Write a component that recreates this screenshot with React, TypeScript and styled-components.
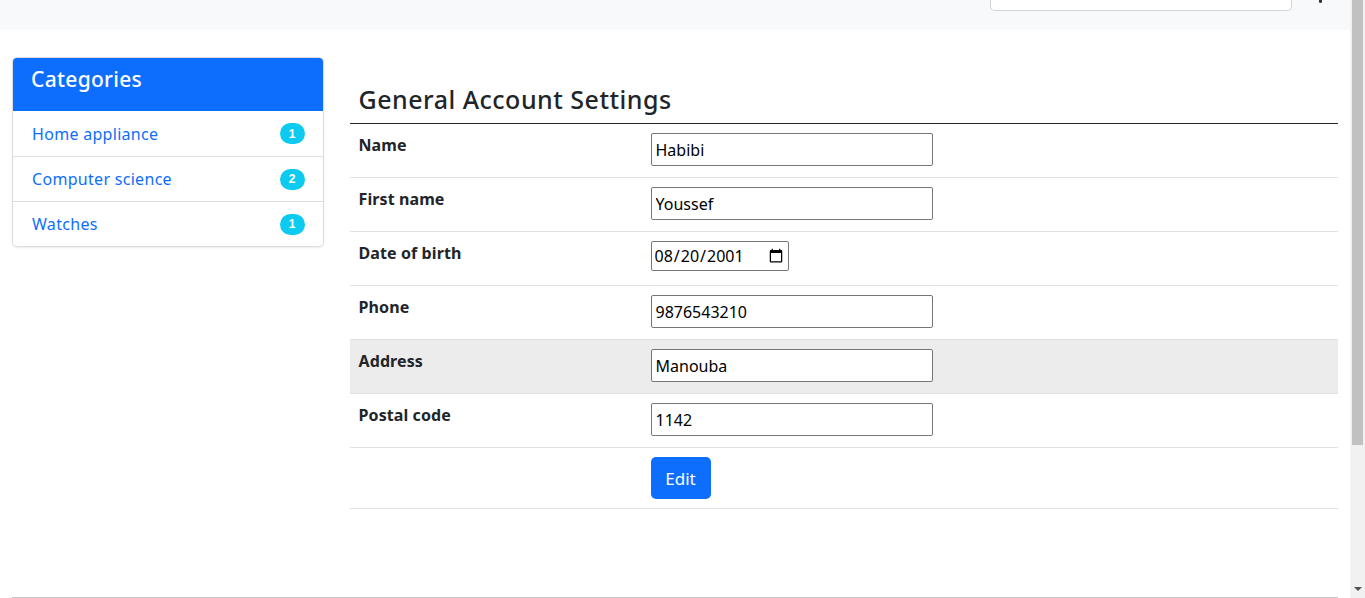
import React from "react";
import styled, { createGlobalStyle } from "styled-components";

const Global = createGlobalStyle`
  html, body { margin: 0; padding: 0; overflow: hidden; }
  body {
    font-family: "Noto Sans", "Open Sans", sans-serif;
    font-size: 16px;
    color: #212529;
    background: #fff;
  }
  * { box-sizing: border-box; }
`;

const Window = styled.div`
  display: flex;
  height: 100vh;
  overflow: hidden;
`;

const Page = styled.div`
  flex: 1;
  min-width: 0;
  overflow: hidden;
`;

const ScrollBar = styled.div`
  width: 15px;
  flex: none;
  background: #f1f1f1;
  display: flex;
  flex-direction: column;
  align-items: center;
  justify-content: space-between;
  padding-bottom: 7px;
`;

const Thumb = styled.div`
  width: 11px;
  height: 445px;
  background: #c1c1c1;
`;

const Arrow = styled.div`
  width: 0;
  height: 0;
  border-left: 4px solid transparent;
  border-right: 4px solid transparent;
  border-top: 4px solid #505050;
`;

const NavBar = styled.header`
  height: 30px;
  background: #f8f9fa;
  display: flex;
  justify-content: flex-end;
  align-items: flex-start;
  padding-right: 28px;
  gap: 27px;
`;

const SearchStub = styled.div`
  width: 302px;
  height: 11px;
  background: #fff;
  border: 1px solid #ced4da;
  border-top: none;
  border-radius: 0 0 5px 5px;
`;

const IconStub = styled.div`
  width: 3px;
  height: 3px;
  background: #333;
  border-radius: 0 0 2px 2px;
`;

const Layout = styled.div`
  display: grid;
  grid-template-columns: 25% 75%;
  width: 100%;
`;

const SideCol = styled.aside`
  padding: 27px 14px 0 12px;
`;

const MainCol = styled.main`
  padding: 55px 12px 0 12px;
`;

const Card = styled.div`
  border: 1px solid #dcdcdc;
  border-radius: 5px;
  box-shadow: 0 1px 2px rgba(0, 0, 0, 0.08);
  overflow: hidden;
`;

const CardHeader = styled.div`
  background: #0d6efd;
  color: #fff;
  height: 53px;
  padding: 7px 18px;
  font-size: 21px;
  font-weight: 500;
  line-height: 28px;
  letter-spacing: 0.3px;
`;

const List = styled.ul`
  list-style: none;
  margin: 0;
  padding: 0;
`;

const Item = styled.li`
  height: 45px;
  display: flex;
  align-items: center;
  justify-content: space-between;
  padding: 0 18px 0 19px;
  border-top: 1px solid #dedede;
  &:first-child { border-top: none; }
`;

const CatLink = styled.a`
  color: #0d6efd;
  text-decoration: none;
  font-size: 16px;
  letter-spacing: 0.3px;
`;

const Badge = styled.span`
  display: inline-flex;
  align-items: center;
  justify-content: center;
  width: 25px;
  height: 21px;
  border-radius: 11px;
  background: #0dcaf0;
  color: #fff;
  font-family: "Liberation Sans", Arial, sans-serif;
  font-weight: 700;
  font-size: 12px;
`;

const Title = styled.h4`
  margin: 0 0 9px 9px;
  font-size: 25px;
  font-weight: 500;
  line-height: 29px;
  letter-spacing: 0.5px;
`;

const Table = styled.table`
  width: 100%;
  border-collapse: collapse;
  border-top: 1px solid #212529;
`;

const Row = styled.tr<{ $hl?: boolean; $tall?: boolean }>`
  height: ${(p) => (p.$tall ? "61px" : "54px")};
  background: ${(p) => (p.$hl ? "#ececec" : "transparent")};
  border-bottom: 1px solid #dee2e6;
`;

const LabelCell = styled.th`
  width: 292px;
  text-align: left;
  vertical-align: top;
  padding: 9px 9px;
  font-weight: 700;
  font-size: 16px;
  line-height: 24px;
  letter-spacing: 0.1px;
`;

const ValueCell = styled.td`
  vertical-align: top;
  padding: 9px 9px;
`;

const TextInput = styled.input`
  width: 282px;
  height: 33px;
  border: 1px solid #767676;
  border-radius: 2px;
  padding: 1px 4px;
  font-family: "Noto Sans", sans-serif;
  font-size: 16px;
  color: #000;
  background: #fff;
`;

const DateInput = styled(TextInput)`
  width: 138px;
  height: 30px;
  padding: 1px 2px;
`;

const EditButton = styled.button`
  width: 60px;
  height: 42px;
  background: #0d6efd;
  color: #fff;
  border: none;
  border-radius: 5px;
  font-family: "Noto Sans", sans-serif;
  font-size: 17px;
  cursor: pointer;
`;

const Footer = styled.footer`
  margin: 88px 12px 0 12px;
  border-top: 1px solid #c6c6c6;
  height: 210px;
`;

const categories = [
  { name: "Home appliance", count: 1 },
  { name: "Computer science", count: 2 },
  { name: "Watches", count: 1 },
];

const fields = [
  { label: "Name", value: "Habibi" },
  { label: "First name", value: "Youssef" },
  { label: "Date of birth", value: "2001-08-20", type: "date" },
  { label: "Phone", value: "9876543210" },
  { label: "Address", value: "Manouba", hl: true },
  { label: "Postal code", value: "1142" },
];

export default function App() {
  return (
    <>
      <Global />
      <Window>
        <Page>
          <NavBar>
            <SearchStub />
            <IconStub />
          </NavBar>
          <Layout>
            <SideCol>
              <Card>
                <CardHeader>Categories</CardHeader>
                <List>
                  {categories.map((c) => (
                    <Item key={c.name}>
                      <CatLink href="#">{c.name}</CatLink>
                      <Badge>{c.count}</Badge>
                    </Item>
                  ))}
                </List>
              </Card>
            </SideCol>
            <MainCol>
              <Title>General Account Settings</Title>
              <Table>
                <tbody>
                  {fields.map((f) => (
                    <Row key={f.label} $hl={f.hl}>
                      <LabelCell>{f.label}</LabelCell>
                      <ValueCell>
                        {f.type === "date" ? (
                          <DateInput type="date" defaultValue={f.value} />
                        ) : (
                          <TextInput type="text" defaultValue={f.value} />
                        )}
                      </ValueCell>
                    </Row>
                  ))}
                  <Row $tall>
                    <LabelCell />
                    <ValueCell>
                      <EditButton>Edit</EditButton>
                    </ValueCell>
                  </Row>
                </tbody>
              </Table>
            </MainCol>
          </Layout>
          <Footer />
        </Page>
        <ScrollBar>
          <Thumb />
          <Arrow />
        </ScrollBar>
      </Window>
    </>
  );
}
